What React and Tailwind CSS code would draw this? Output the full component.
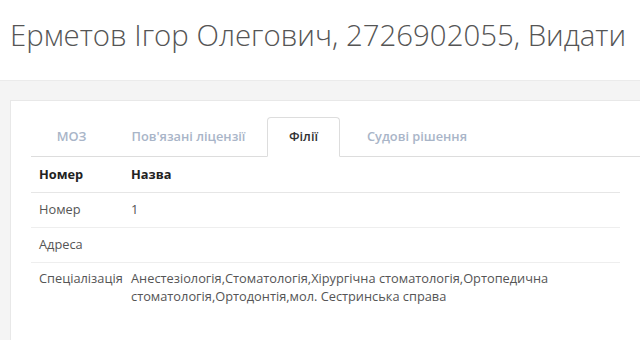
import React from 'react'

const font = { fontFamily: '"Open Sans", "Liberation Sans", sans-serif' }

const tabs = [
  { label: 'МОЗ', w: 'w-[77px]' },
  { label: "Пов'язані ліцензії", w: 'w-[157px]' },
  { label: 'Філії', w: 'w-[73px]', active: true },
  { label: 'Судові рішення', w: 'w-[154px]' },
]

const rows = [
  ['Номер', '1'],
  ['Адреса', ''],
  [
    'Спеціалізація',
    'Анестезіологія,Стоматологія,Хірургічна стоматологія,Ортопедична стоматологія,Ортодонтія,мол. Сестринська справа',
  ],
]

export default function App() {
  return (
    <div className="w-[640px] h-[340px] overflow-hidden bg-white" style={font}>
      {/* Header */}
      <div className="h-[80px] px-[10px] pt-[15px]">
        <h1 className="text-[29.4px] leading-[40px] font-light text-[#555] whitespace-nowrap">
          Ерметов Ігор Олегович, 2726902055, Видати
        </h1>
      </div>

      {/* Body */}
      <div className="h-[260px] bg-[#f4f4f4] border-t border-[#ebebeb] pl-[10px] pt-[19px]">
        <div className="w-[660px] h-[260px] bg-white border border-[#e8e8e8] pl-[20px] pt-[16px]">
          {/* Tabs */}
          <ul className="flex border-b border-[#dddddd] h-[40px] pl-[2px]">
            {tabs.map((t) => (
              <li
                key={t.label}
                className={
                  t.active
                    ? `${t.w} h-[40px] flex items-center justify-center text-[12.8px] font-semibold text-[#333] bg-white border border-[#dddddd] border-b-white rounded-t-[4px]`
                    : `${t.w} h-[39px] flex items-center justify-center text-[12.8px] font-semibold text-[#a9b5c8]`
                }
              >
                {t.label}
              </li>
            ))}
          </ul>

          {/* Table */}
          <table className="w-[589px] text-[12.8px] text-[#555] border-collapse">
            <thead>
              <tr className="h-[35px] border-b border-[#e6e6e6]">
                <th className="w-[100px] pl-[8px] text-left font-bold text-[#222]">Номер</th>
                <th className="text-left font-bold text-[#222]">Назва</th>
              </tr>
            </thead>
            <tbody>
              {rows.map(([k, v], i) => (
                <tr
                  key={k}
                  className={i < rows.length - 1 ? 'h-[35px] border-b border-[#eeeeee]' : ''}
                >
                  <td className={i < rows.length - 1 ? 'pl-[8px] align-middle' : 'pl-[8px] pt-[6px] align-top leading-[18.5px]'}>
                    {k}
                  </td>
                  <td className={i < rows.length - 1 ? 'align-middle' : 'pt-[6px] pr-[40px] align-top leading-[18.5px]'}>
                    {v}
                  </td>
                </tr>
              ))}
            </tbody>
          </table>
        </div>
      </div>
    </div>
  )
}
